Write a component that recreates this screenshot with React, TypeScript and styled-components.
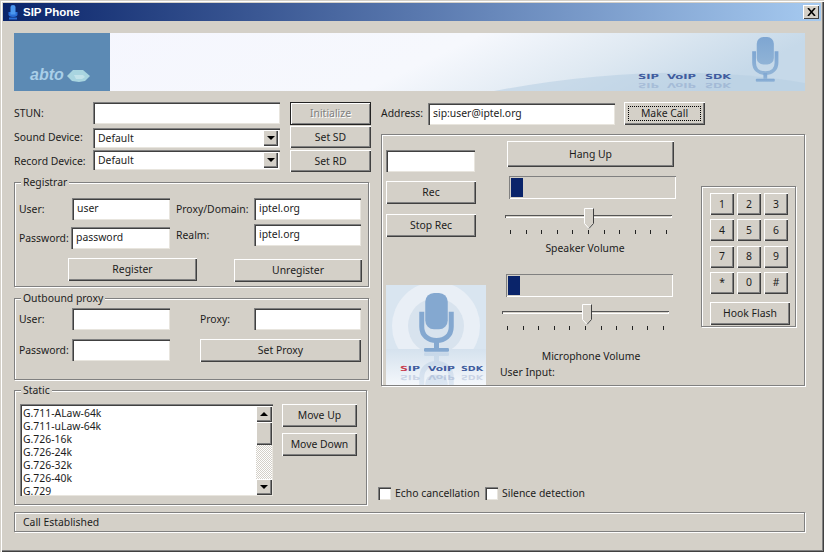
import React from "react";
import styled, { createGlobalStyle } from "styled-components";

const GlobalStyle = createGlobalStyle`
  html, body { margin: 0; padding: 0; width: 824px; height: 552px; overflow: hidden; background: #d4d0c8; }
  * { box-sizing: border-box; }
`;

const FONT = `"Noto Sans", "Liberation Sans", sans-serif`;

const Dialog = styled.div`
  width: 824px;
  height: 552px;
  padding: 3px 3px 3px 3px;
  background: #d4d0c8;
  color: #1c1c1c;
  font: 10.4px/13px ${FONT};
  box-shadow: inset 1px 1px 0 #d4d0c8, inset 2px 2px 0 #fff, inset -1px -1px 0 #404040, inset -2px -2px 0 #808080;
`;
const TitleBar = styled.div`
  height: 18px;
  padding: 0 2px 0 5px;
  display: flex;
  align-items: center;
  background: linear-gradient(90deg, #0a246a, #a6caf0);
`;
const TitleText = styled.span`
  margin-left: 5px;
  flex: 1;
  color: #fff;
  font: bold 11.500px/18px "Liberation Sans", sans-serif;
`;
const CloseButton = styled.div`
  width: 16px;
  height: 14px;
  display: flex;
  align-items: center;
  justify-content: center;
  background: #d4d0c8;
  box-shadow: inset 1px 1px 0 #fff, inset -1px -1px 0 #404040;
`;
const Content = styled.div`
  padding: 12px 0 0 11px;
`;
const Banner = styled.svg`
  display: block;
  width: 791px;
  height: 58px;
`;
const MainGrid = styled.div`
  margin-top: 11px;
  height: 403px;
  display: grid;
  grid-template-columns: 357px 424px;
  column-gap: 10px;
`;
const Column = styled.div`
  display: flex;
  flex-direction: column;
  align-items: flex-start;
`;
const DeviceRow = styled.div<{ $mt?: number }>`
  margin-top: ${(p) => p.$mt ?? 0}px;
  height: 22px;
  display: grid;
  grid-template-columns: 79px 187px 91px;
  & > :last-child { margin-left: 10px; width: 81px; }
`;
const Label = styled.span<{ $w?: number; $dy?: number }>`
  display: flex;
  align-items: center;
  white-space: nowrap;
  width: ${(p) => (p.$w ? `${p.$w}px` : "auto")};
  padding-top: ${(p) => Math.max(p.$dy ?? 0, 0)}px;
  padding-bottom: ${(p) => Math.max(-(p.$dy ?? 0), 0)}px;
`;
const TextInput = styled.input<{ $w?: number }>`
  width: ${(p) => (p.$w ? `${p.$w}px` : "100%")};
  height: 22px;
  padding: 0 0 2px 5px;
  border: 0;
  outline: 0;
  background: #fff;
  color: #1c1c1c;
  font: 10.4px ${FONT};
  box-shadow: inset 1px 1px 0 #808080, inset 2px 2px 0 #404040, inset -1px -1px 0 #e8e5de;
`;
const Combo = styled.div<{ $align: string }>`
  align-self: ${(p) => p.$align};
  height: 20px;
  padding: 2px 2px 2px 5px;
  display: flex;
  align-items: center;
  justify-content: space-between;
  background: #fff;
  box-shadow: inset 1px 1px 0 #808080, inset 2px 2px 0 #404040, inset -1px -1px 0 #e8e5de;
`;
const ArrowBox = styled.div<{ $h?: number }>`
  width: 15px;
  height: ${(p) => p.$h ?? 16}px;
  flex: none;
  display: flex;
  align-items: center;
  justify-content: center;
  background: #d4d0c8;
  box-shadow: inset 1px 1px 0 #fff, inset -1px -1px 0 #404040, inset -2px -2px 0 #808080;
`;
const Triangle = styled.div<{ $up?: boolean }>`
  width: 0;
  height: 0;
  border-left: 4px solid transparent;
  border-right: 4px solid transparent;
  ${(p) => (p.$up ? "border-bottom: 4px solid #000;" : "border-top: 4px solid #000;")}
`;
const Btn = styled.button<{ $w?: number; $h?: number; $mt?: number; $ml?: number; $kind?: string }>`
  position: relative;
  flex: none;
  width: ${(p) => (p.$w ? `${p.$w}px` : "auto")};
  height: ${(p) => p.$h ?? 23}px;
  margin: ${(p) => p.$mt ?? 0}px 0 0 ${(p) => p.$ml ?? 0}px;
  padding: 0;
  border: 0;
  background: #d4d0c8;
  color: ${(p) => (p.$kind === "disabled" ? "#808080" : "#1c1c1c")};
  text-shadow: ${(p) => (p.$kind === "disabled" ? "1px 1px 0 #fff" : "none")};
  font: 10.4px/13px ${FONT};
  box-shadow: ${(p) =>
    p.$kind === "disabled"
      ? "inset 0 0 0 1px #222, inset 2px 2px 0 #fff, inset -2px -2px 0 #808080"
      : "inset 1px 1px 0 #fff, inset -1px -1px 0 #404040, inset -2px -2px 0 #808080"};
`;
const FocusRing = styled.span`
  position: absolute;
  inset: 4px;
  border: 1px dotted #000;
`;
const Group = styled.div<{ $w: number; $h: number; $mt?: number; $pt?: number; $pl?: number }>`
  position: relative;
  flex: none;
  width: ${(p) => p.$w}px;
  height: ${(p) => p.$h}px;
  margin-top: ${(p) => p.$mt ?? 0}px;
  padding: ${(p) => p.$pt ?? 0}px 0 0 ${(p) => p.$pl ?? 0}px;
  border: 1px solid #808080;
  box-shadow: 1px 1px 0 #fff, inset 1px 1px 0 #fff;
`;
const Legend = styled.span`
  position: absolute;
  top: -7px;
  left: 6px;
  padding: 0 2px;
  background: #d4d0c8;
`;
const GroupRow = styled.div`
  display: flex;
  align-items: flex-start;
`;
const FieldStack = styled.div<{ $ml?: number }>`
  margin-left: ${(p) => p.$ml ?? 0}px;
  display: flex;
  flex-direction: column;
  align-items: flex-start;
`;
const Field = styled.div<{ $mt?: number }>`
  display: flex;
  height: 22px;
  margin-top: ${(p) => p.$mt ?? 0}px;
`;
const ListRow = styled.div`
  display: flex;
  align-items: flex-start;
`;
const ListBox = styled.div`
  width: 253px;
  height: 92px;
  padding: 2px 1px 1px 2px;
  display: flex;
  background: #fff;
  box-shadow: inset 1px 1px 0 #808080, inset 2px 2px 0 #404040, inset -1px -1px 0 #e8e5de;
`;
const ListItems = styled.div`
  flex: 1;
  padding: 1px 0 0 1px;
  overflow: hidden;
`;
const ListItem = styled.div`
  height: 13px;
  white-space: nowrap;
`;
const Scrollbar = styled.div`
  width: 16px;
  display: flex;
  flex-direction: column;
  background: repeating-conic-gradient(#fff 0 25%, #d4d0c8 0 50%) 0 0 / 2px 2px;
`;
const ScrollThumb = styled.div`
  height: 23px;
  background: #d4d0c8;
  box-shadow: inset 1px 1px 0 #fff, inset -1px -1px 0 #404040, inset -2px -2px 0 #808080;
`;
const ScrollFill = styled.div`
  flex: 1;
`;
const ScrollArrow = styled(ArrowBox)`
  width: 16px;
`;
const ButtonStack = styled.div`
  margin-left: 9px;
  display: flex;
  flex-direction: column;
  gap: 6px;
`;
const AddressRow = styled.div`
  display: flex;
  align-items: flex-start;
  height: 23px;
`;
const AddressLabel = styled(Label)`
  width: 47px;
  height: 23px;
`;
const AddressInput = styled(TextInput)`
  margin-top: 1px;
`;
const CallPanel = styled.div`
  display: flex;
  align-items: flex-start;
`;
const RecColumn = styled(Column)`
  width: 100px;
  margin: 15px 0 0 4px;
`;
const MicPicture = styled.svg`
  display: block;
  margin-top: 48px;
  width: 100px;
  height: 100px;
`;
const VolumeColumn = styled(Column)`
  width: 176px;
  margin: 6px 0 0 14px;
`;
const Meter = styled.div<{ $ml: number; $mt: number }>`
  width: 167px;
  height: 23px;
  margin: ${(p) => p.$mt}px 0 0 ${(p) => p.$ml}px;
  padding: 2px;
  box-shadow: inset 1px 1px 0 #808080, inset -1px -1px 0 #fff;
`;
const MeterFill = styled.div`
  height: 19px;
  background: #0a246a;
`;
const Slider = styled.div<{ $ml: number; $mt: number }>`
  position: relative;
  width: 167px;
  height: 26px;
  margin: ${(p) => p.$mt}px 0 0 ${(p) => p.$ml}px;
  padding-top: 7px;
`;
const Track = styled.div`
  height: 3px;
  background: #d4d0c8;
  box-shadow: inset 1px 1px 0 #555, inset -1px -1px 0 #fff;
`;
const Thumb = styled.svg<{ $left: number }>`
  position: absolute;
  top: 0;
  left: ${(p) => p.$left}px;
  width: 11px;
  height: 22px;
`;
const Ticks = styled.div`
  margin-top: 12px;
  padding: 0 5px;
  display: flex;
  justify-content: space-between;
`;
const Tick = styled.i`
  display: block;
  width: 1px;
  height: 4px;
  background: #222;
`;
const VolumeLabel = styled.div<{ $ml: number; $w: number; $mt: number }>`
  width: ${(p) => p.$w}px;
  margin: ${(p) => p.$mt}px 0 0 ${(p) => p.$ml}px;
  height: 14px;
  text-align: center;
  white-space: nowrap;
`;
const UserInput = styled.div`
  margin-top: 2px;
  height: 14px;
`;
const KeypadGroup = styled(Group)`
  margin-left: 25px;
`;
const KeyGrid = styled.div`
  display: grid;
  grid-template-columns: repeat(3, 24px);
  grid-auto-rows: 22px;
  column-gap: 3px;
  row-gap: 4.33px;
`;
const OptionRow = styled.div`
  margin: 100px 0 0 -3px;
  display: flex;
  align-items: center;
  height: 14px;
`;
const Check = styled.span`
  width: 13px;
  height: 13px;
  flex: none;
  background: #fff;
  box-shadow: inset 1px 1px 0 #808080, inset 2px 2px 0 #404040, inset -1px -1px 0 #e8e5de;
`;
const CheckLabel = styled.span<{ $w: number }>`
  width: ${(p) => p.$w}px;
  margin-left: 4px;
  white-space: nowrap;
`;
const StatusBar = styled.div`
  margin-top: 7px;
  width: 791px;
  height: 20px;
  padding-left: 9px;
  display: flex;
  align-items: center;
  box-shadow: inset 1px 1px 0 #808080, inset -1px -1px 0 #808080, 1px 1px 0 #fff, inset 2px 2px 0 #fff;
`;

const MicShape: React.FC<{ x: number; y: number; s: number; fill: string }> = ({ x, y, s, fill }) => (
  <g transform={`translate(${x} ${y}) scale(${s})`}>
    <rect x="5" y="0" width="18" height="29" rx="7" fill={fill} />
    <path d="M2.200 15v12c0 7 5 11 11.800 11s11.800-4 11.800-11V15" fill="none" stroke={fill} strokeWidth="4" />
    <rect x="12" y="38" width="4" height="6" fill={fill} />
    <rect x="4" y="44" width="20" height="3" rx="1" fill={fill} />
  </g>
);

const Tagline: React.FC<{ x: number[]; w: number[]; y: number; red?: boolean }> = ({ x, w, y, red }) => (
  <g fontFamily="DejaVu Sans, sans-serif" fontWeight="bold" fontSize={7} fill="#3f5c9e">
    <text x={x[0]} y={y} textLength={w[0]} lengthAdjust="spacingAndGlyphs">
      {red ? <tspan fill="#c8404f">S</tspan> : "S"}IP
    </text>
    <text x={x[1]} y={y} textLength={w[1]} lengthAdjust="spacingAndGlyphs">VoIP</text>
    <text x={x[2]} y={y} textLength={w[2]} lengthAdjust="spacingAndGlyphs">SDK</text>
  </g>
);

const Ten = Array.from({ length: 11 }, (_, i) => i);

const VolumeSlider: React.FC<{ ml: number; mt: number; left: number }> = ({ ml, mt, left }) => (
  <Slider $ml={ml} $mt={mt}>
    <Track />
    <Thumb $left={left} viewBox="0 0 11 22">
      <path d="M.5.5h9v15l-4.5 5-4.5-5z" fill="#d4d0c8" stroke="#fff" />
      <path d="M9.5.5v15l-4.5 5" fill="none" stroke="#404040" />
    </Thumb>
    <Ticks>
      {Ten.map((i) => (
        <Tick key={i} />
      ))}
    </Ticks>
  </Slider>
);

const KEYS = ["1", "2", "3", "4", "5", "6", "7", "8", "9", "*", "0", "#"];
const CODECS = ["G.711-ALaw-64k", "G.711-uLaw-64k", "G.726-16k", "G.726-24k", "G.726-32k", "G.726-40k", "G.729"];
const BANNER_X = [624, 653, 691];
const BANNER_W = [21, 29, 26];
const PICTURE_X = [14, 42, 75];
const PICTURE_W = [20, 27, 22];

export default function App() {
  return (
    <Dialog>
      <GlobalStyle />
      <TitleBar>
        <svg width="10" height="15" viewBox="0 0 10 15">
          <path d="M.5 7v2.500C.5 11 2 12 5 12s4.500-1 4.500-2.500V7" fill="#2a6fd8" />
          <path d="M2.500 2a2.500 2 0 0 1 5 0v7.500h-5z" fill="#4a97f0" />
          <rect x="1" y="12.500" width="8" height="2" fill="#2a6fd8" />
        </svg>
        <TitleText>SIP Phone</TitleText>
        <CloseButton>
          <svg width="9" height="8" viewBox="0 0 9 8">
            <path d="M1 0l7 8M8 0L1 8" stroke="#000" strokeWidth="1.6" />
          </svg>
        </CloseButton>
      </TitleBar>
      <Content>
        <Banner viewBox="0 0 791 58">
          <defs>
            <linearGradient id="bannerBg" x1="0" y1="0" x2="1" y2="0.15">
              <stop offset="0" stopColor="#f5f6fe" />
              <stop offset="0.58" stopColor="#f6f8fd" />
              <stop offset="0.8" stopColor="#dfe9f2" />
              <stop offset="1" stopColor="#c6d9e9" />
            </linearGradient>
            <linearGradient id="micFade" x1="0" y1="0" x2="0" y2="1">
              <stop offset="0" stopColor="#7ea6d2" />
              <stop offset="1" stopColor="#90b3d6" />
            </linearGradient>
          </defs>
          <rect width="791" height="58" fill="url(#bannerBg)" />
          <path d="M480 58Q650 26 791 50V58Z" fill="#b6cee2" opacity=".55" />
          <rect width="96" height="58" fill="#5c8ab4" />
          <text x="16" y="47" fontFamily="Liberation Sans, sans-serif" fontWeight="bold" fontStyle="italic" fontSize="16" fill="#a9cfe8">abto</text>
          <path d="M53 43l6-6h10l7 6-5 5-6 1-7-1z" fill="#a9d5e0" />
          <path d="M60 42h9l2 2-3 2h-6z" fill="#c3e3ea" />
          <MicShape x={738} y={4} s={0.95} fill="url(#micFade)" />
          <Tagline x={BANNER_X} w={BANNER_W} y={46} />
          <g transform="translate(0 96) scale(1 -1)" opacity=".2">
            <Tagline x={BANNER_X} w={BANNER_W} y={46} />
          </g>
        </Banner>
        <MainGrid>
          <Column>
            <DeviceRow>
              <Label $dy={-1}>STUN:</Label>
              <TextInput />
              <Btn $kind="disabled">Initialize</Btn>
            </DeviceRow>
            <DeviceRow $mt={2}>
              <Label $dy={1}>Sound Device:</Label>
              <Combo $align="end">
                Default
                <ArrowBox><Triangle /></ArrowBox>
              </Combo>
              <Btn $h={22}>Set SD</Btn>
            </DeviceRow>
            <DeviceRow $mt={2}>
              <Label $dy={1}>Record Device:</Label>
              <Combo $align="start">
                Default
                <ArrowBox><Triangle /></ArrowBox>
              </Combo>
              <Btn $h={22}>Set RD</Btn>
            </DeviceRow>

            <Group $w={355} $h={105} $mt={10} $pt={15} $pl={4}>
              <Legend>Registrar</Legend>
              <GroupRow>
                <FieldStack>
                  <Field>
                    <Label $w={53}>User:</Label>
                    <TextInput $w={98} defaultValue="user" />
                  </Field>
                  <Field $mt={7}>
                    <Label $w={52}>Password:</Label>
                    <TextInput $w={99} defaultValue="password" />
                  </Field>
                </FieldStack>
                <FieldStack $ml={6}>
                  <Field>
                    <Label $w={78}>Proxy/Domain:</Label>
                    <TextInput $w={107} defaultValue="iptel.org" />
                  </Field>
                  <Field $mt={4}>
                    <Label $w={78}>Realm:</Label>
                    <TextInput $w={107} defaultValue="iptel.org" />
                  </Field>
                </FieldStack>
              </GroupRow>
              <GroupRow>
                <Btn $w={129} $mt={9} $ml={49}>Register</Btn>
                <Btn $w={128} $mt={10} $ml={37}>Unregister</Btn>
              </GroupRow>
            </Group>

            <Group $w={355} $h={82} $mt={11} $pt={9} $pl={4}>
              <Legend>Outbound proxy</Legend>
              <GroupRow>
                <FieldStack>
                  <Field>
                    <Label $w={53}>User:</Label>
                    <TextInput $w={98} />
                  </Field>
                  <Field $mt={9}>
                    <Label $w={53}>Password:</Label>
                    <TextInput $w={98} />
                  </Field>
                </FieldStack>
                <FieldStack $ml={30}>
                  <Field>
                    <Label $w={54}>Proxy:</Label>
                    <TextInput $w={107} />
                  </Field>
                  <Btn $w={161} $mt={9}>Set Proxy</Btn>
                </FieldStack>
              </GroupRow>
            </Group>

            <Group $w={353} $h={115} $mt={10} $pt={13} $pl={5}>
              <Legend>Static</Legend>
              <ListRow>
                <ListBox>
                  <ListItems>
                    {CODECS.map((c) => (
                      <ListItem key={c}>{c}</ListItem>
                    ))}
                  </ListItems>
                  <Scrollbar>
                    <ScrollArrow><Triangle $up /></ScrollArrow>
                    <ScrollThumb />
                    <ScrollFill />
                    <ScrollArrow><Triangle /></ScrollArrow>
                  </Scrollbar>
                </ListBox>
                <ButtonStack>
                  <Btn $w={75}>Move Up</Btn>
                  <Btn $w={75}>Move Down</Btn>
                </ButtonStack>
              </ListRow>
            </Group>
          </Column>

          <Column>
            <AddressRow>
              <AddressLabel>Address:</AddressLabel>
              <AddressInput $w={187} defaultValue="sip:user@iptel.org" />
              <Btn $w={81} $ml={9}>
                Make Call
                <FocusRing />
              </Btn>
            </AddressRow>
            <Group $w={424} $h={252} $mt={9}>
              <CallPanel>
                <RecColumn>
                  <TextInput $w={89} />
                  <Btn $w={90} $mt={9}>Rec</Btn>
                  <Btn $w={90} $mt={10}>Stop Rec</Btn>
                  <MicPicture viewBox="0 0 100 100">
                    <defs>
                      <linearGradient id="floor" x1="0" y1="0" x2="0" y2="1">
                        <stop offset="0" stopColor="#d5e2ee" />
                        <stop offset="1" stopColor="#f4f7fb" />
                      </linearGradient>
                    </defs>
                    <rect width="100" height="100" fill="#d9e5f0" />
                    <circle cx="50" cy="41" r="44" fill="#e9eff6" />
                    <circle cx="50" cy="41" r="28" fill="#d8e3ee" />
                    <rect y="64" width="100" height="36" fill="url(#floor)" />
                    <MicShape x={33} y={8} s={1.25} fill="#84a8d0" />
                    <g transform="translate(0 134) scale(1 -1)" opacity=".2">
                      <MicShape x={33} y={8} s={1.25} fill="#84a8d0" />
                    </g>
                    <Tagline x={PICTURE_X} w={PICTURE_W} y={86} red />
                    <g transform="translate(0 176) scale(1 -1)" opacity=".2">
                      <Tagline x={PICTURE_X} w={PICTURE_W} y={86} />
                    </g>
                  </MicPicture>
                </RecColumn>
                <VolumeColumn>
                  <Btn $w={167} $h={26} $ml={7}>Hang Up</Btn>
                  <Meter $ml={9} $mt={9}>
                    <MeterFill style={{ width: 12 }} />
                  </Meter>
                  <VolumeSlider ml={5} mt={9} left={79} />
                  <VolumeLabel $ml={5} $w={160} $mt={8}>Speaker Volume</VolumeLabel>
                  <Meter $ml={6} $mt={18}>
                    <MeterFill style={{ width: 12 }} />
                  </Meter>
                  <VolumeSlider ml={2} mt={7} left={80} />
                  <VolumeLabel $ml={2} $w={178} $mt={20}>Microphone Volume</VolumeLabel>
                  <UserInput>User Input:</UserInput>
                </VolumeColumn>
                <KeypadGroup $w={95} $h={141} $mt={51} $pt={6} $pl={8}>
                  <KeyGrid>
                    {KEYS.map((k) => (
                      <Btn key={k} $h={22}>{k}</Btn>
                    ))}
                  </KeyGrid>
                  <Btn $w={80} $mt={8}>Hook Flash</Btn>
                </KeypadGroup>
              </CallPanel>
            </Group>
            <OptionRow>
              <Check />
              <CheckLabel $w={90}>Echo cancellation</CheckLabel>
              <Check />
              <CheckLabel $w={90}>Silence detection</CheckLabel>
            </OptionRow>
          </Column>
        </MainGrid>
        <StatusBar>Call Established</StatusBar>
      </Content>
    </Dialog>
  );
}
